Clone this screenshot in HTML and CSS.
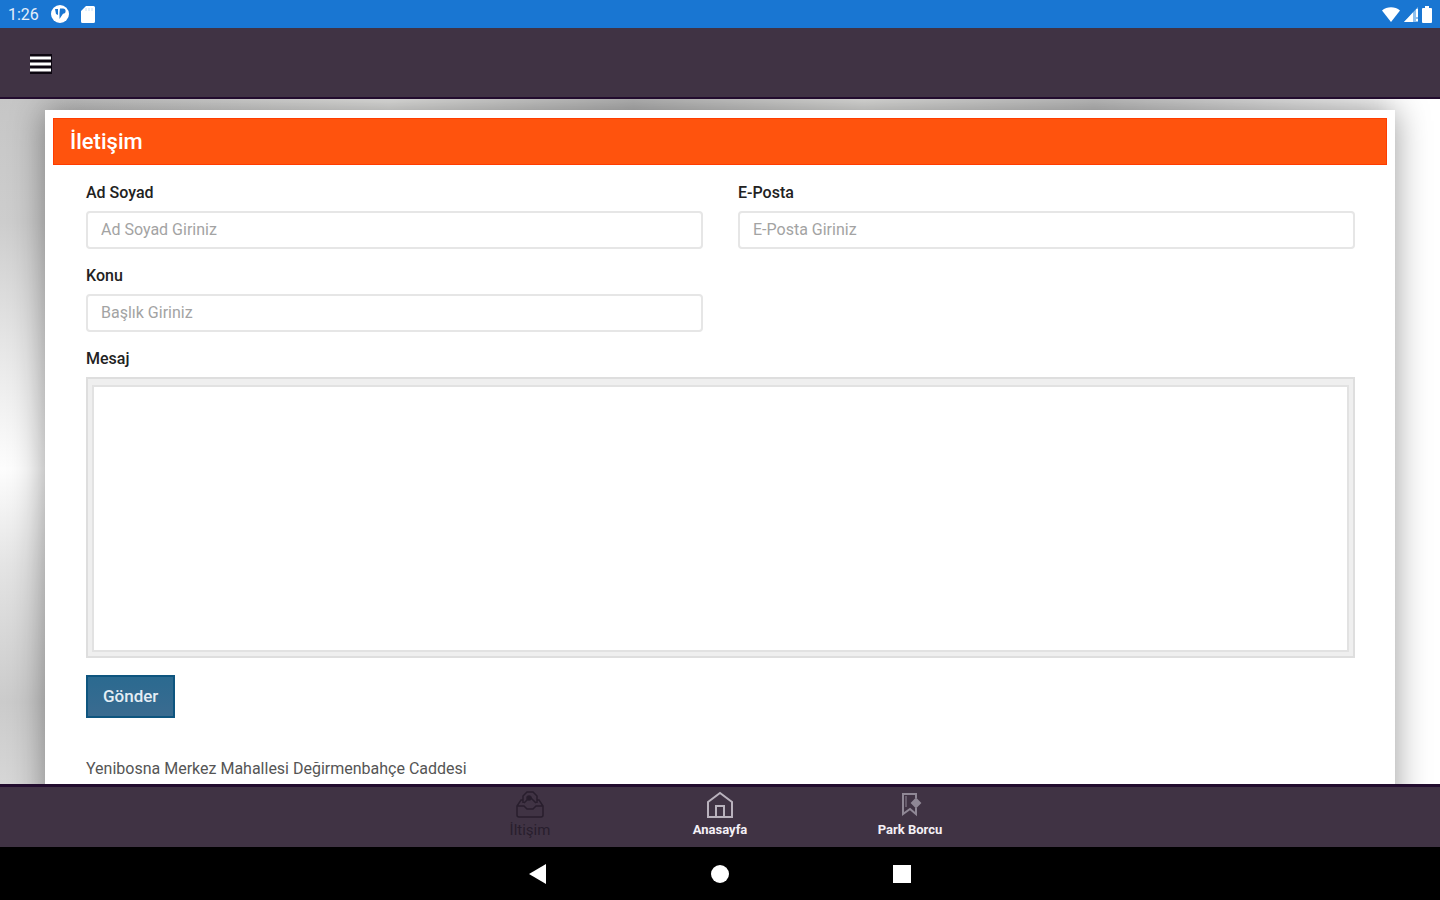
FILE: index.html
```html
<!DOCTYPE html>
<html lang="tr">
<head>
    <meta charset="UTF-8">
    <meta name="viewport" content="width=device-width, initial-scale=1.0">
    <title>İletişim</title>
    <link rel="stylesheet" href="styles.css">
</head>
<body>
    <div class="status-bar">
        <div class="status-left">
            <span class="time">1:26</span>
            <svg width="18" height="18" viewBox="0 0 18 18">
                <circle cx="9" cy="9" r="9" fill="#fff"/>
                <path d="M4 4h3v6L5 9zM9 3.500h3a2.600 2.600 0 0 1 0 5.200L8.500 14V8z" fill="#1976d2"/>
            </svg>
            <svg width="14" height="17" viewBox="0 0 14 17">
                <path d="M5 0h7.500A1.500 1.500 0 0 1 14 1.500v14a1.500 1.500 0 0 1-1.500 1.500h-11A1.500 1.500 0 0 1 0 15.500V5z" fill="#fff"/>
                <path d="M5 2v3M8 2v3M11 2v3" stroke="#c5def6"/>
            </svg>
        </div>
        <div class="status-right">
            <svg width="18" height="15" viewBox="0 0 18 15">
                <path d="M0 3.500C5-.8 13-.8 18 3.500L9 15z" fill="#fff"/>
            </svg>
            <svg width="14" height="15" viewBox="0 0 14 15">
                <path d="M14 0v15H0z" fill="#8fc0ee"/>
                <path d="M9 5.400V15H0z" fill="#fff"/>
                <path d="M13 2v8M13 12v2" stroke="#fff" stroke-width="2"/>
            </svg>
            <svg width="10" height="17" viewBox="0 0 10 17">
                <path d="M3 0h4v2h2a1 1 0 0 1 1 1v13a1 1 0 0 1-1 1H1a1 1 0 0 1-1-1V3a1 1 0 0 1 1-1h2z" fill="#fff"/>
            </svg>
        </div>
    </div>

    <header class="app-bar">
        <button class="menu-btn" aria-label="Menü">
            <svg width="24" height="22" viewBox="0 0 24 22">
                <path d="M1 1h22v20H1z" fill="#0c0610"/>
                <path d="M1 5h21M1 11h21M1 17h21" stroke="#fff" stroke-width="3"/>
            </svg>
        </button>
    </header>

    <main class="content">
        <section class="card">
            <h1>İletişim</h1>
            <form class="contact-form">
                <div class="form-grid">
                    <div class="form-group">
                        <label for="name">Ad Soyad</label>
                        <input type="text" id="name" placeholder="Ad Soyad Giriniz">
                    </div>
                    <div class="form-group">
                        <label for="email">E-Posta</label>
                        <input type="email" id="email" placeholder="E-Posta Giriniz">
                    </div>
                    <div class="form-group">
                        <label for="subject">Konu</label>
                        <input type="text" id="subject" placeholder="Başlık Giriniz">
                    </div>
                    <div class="form-group wide">
                        <label for="message">Mesaj</label>
                        <div class="editor">
                            <textarea id="message"></textarea>
                        </div>
                    </div>
                </div>
                <button type="button" class="send-btn">Gönder</button>
                <p class="address">Yenibosna Merkez Mahallesi Değirmenbahçe Caddesi</p>
            </form>
        </section>
    </main>

    <nav class="tab-bar">
        <a href="#" class="tab active">
            <svg width="28" height="28" viewBox="0 0 28 28" fill="none" stroke="currentColor" stroke-width="1.500">
                <path d="M7 9H5l-4 6v9a2 2 0 0 0 2 2h22a2 2 0 0 0 2-2v-9l-4-6h-2M1 15h7l3 3h6l3-3h7"/>
                <path d="M7 12V5l4-4h6l4 4v7M8 12l6-6 6 6"/>
                <circle cx="13" cy="7" r="2" fill="currentColor"/>
            </svg>
            <span>İltişim</span>
        </a>
        <a href="#" class="tab">
            <svg width="28" height="28" viewBox="0 0 28 28" fill="none" stroke="#b9b2bd" stroke-width="2">
                <path d="M2 11 14 2l12 9v15H2z"/>
                <path d="M10 26V15h8v11"/>
            </svg>
            <span>Anasayfa</span>
        </a>
        <a href="#" class="tab">
            <svg width="28" height="28" viewBox="0 0 28 28" fill="none" stroke="#8f8795" stroke-width="2">
                <path d="M20 7V3H7v20l7-5 6 5v-6"/>
                <path d="M10 5v11" stroke-width="1"/>
                <path d="m20 8 4 4-4 4-4-4z" fill="#8f8795"/>
            </svg>
            <span>Park Borcu</span>
        </a>
    </nav>

    <div class="system-bar">
        <button aria-label="Geri">
            <svg width="20" height="20" viewBox="0 0 20 20"><path d="M18 0v20L1 10z" fill="#fff"/></svg>
        </button>
        <button aria-label="Ana ekran">
            <svg width="20" height="20" viewBox="0 0 20 20"><circle cx="10" cy="10" r="9" fill="#fff"/></svg>
        </button>
        <button aria-label="Son uygulamalar">
            <svg width="20" height="20" viewBox="0 0 20 20"><path d="M1 1h18v18H1z" fill="#fff"/></svg>
        </button>
    </div>
</body>
</html>
```
FILE: styles.css
```css
* {
    margin: 0;
    padding: 0;
    box-sizing: border-box;
    font-family: Roboto, 'Liberation Sans', sans-serif;
}

body {
    display: flex;
    flex-direction: column;
    height: 100vh;
    overflow: hidden;
    background: #fff;
    color: #222;
    font-size: 16px;
}

svg {
    display: block;
}

button {
    border: none;
    background: none;
    cursor: pointer;
}

/* Android status bar */
.status-bar {
    display: flex;
    justify-content: space-between;
    align-items: center;
    flex: none;
    height: 28px;
    padding: 0 8px;
    background: #1976d2;
    color: #e3effb;
}

.status-left {
    display: flex;
    align-items: center;
    gap: 12px;
}

.status-right {
    display: flex;
    align-items: center;
    gap: 4px;
}

.time {
    font-size: 16px;
}

.app-bar {
    display: flex;
    align-items: center;
    flex: none;
    height: 71px;
    padding: 2px 29px 0;
    background: #403344;
    border-bottom: 2px solid #220c2e;
}

/* Page background */
.content {
    flex: 1;
    min-height: 0;
    overflow: hidden;
    padding: 11px 45px 0;
    background:
        linear-gradient(90deg, transparent 92%, #fff 97%),
        linear-gradient(90deg, transparent 4%, #e8e8e6 27%, #bbb 44%, #e4e4e2 60%, #c4c4c4 76%, #eee 92%),
        linear-gradient(180deg, #c6c6c6 0%, #cdcdcd 18%, #e6e6e6 36%, #fdfdfd 54%, #e4e4e4 68%, #cbcbcb 88%, #d6d6d6 100%);
}

.card {
    padding: 8px 8px 64px;
    background: #fff;
    box-shadow: 0 0 32px rgba(0, 0, 0, 0.4);
}

.card h1 {
    padding: 0 16px;
    background: #ff530d;
    border: 1px solid #ff3c00;
    color: #fff;
    font-size: 22px;
    font-weight: 500;
    line-height: 45px;
}

.contact-form {
    padding: 16px 32px 0 33px;
}

.form-grid {
    display: grid;
    grid-template-columns: 1fr 1fr;
    gap: 15px 35px;
}

.form-group label {
    display: block;
    margin-bottom: 6px;
    font-weight: 500;
    line-height: 24px;
}

.form-group input {
    display: block;
    width: 100%;
    height: 38px;
    padding: 0 13px 2px;
    border: 2px solid #e6e6e6;
    border-radius: 4px;
    background: #fff;
    font-size: 16px;
}

.form-group input::placeholder {
    color: #a3a3a3;
}

.wide {
    grid-column: 1 / -1;
}

.editor {
    height: 281px;
    padding: 6px 4px 4px;
    border: 2px solid #dedede;
    background: #efefef;
}

.editor textarea {
    display: block;
    width: 100%;
    height: 100%;
    border: 2px solid #e2e2e2;
    background: #fff;
    font-size: 16px;
    resize: none;
}

.send-btn {
    margin-top: 17px;
    padding: 0 15px;
    border: 2px solid #0e557f;
    background: linear-gradient(#2b6a90, #3a6b90);
    color: #e4eef5;
    font-size: 17px;
    font-weight: 500;
    line-height: 39px;
}

.address {
    margin-top: 39px;
    color: #555;
    line-height: 24px;
}

/* Bottom tabs */
.tab-bar {
    display: flex;
    justify-content: center;
    flex: none;
    height: 63px;
    background: #403344;
    border-top: 3px solid #220c2e;
}

.tab {
    display: flex;
    flex-direction: column;
    align-items: center;
    gap: 1px;
    width: 190px;
    padding-top: 4px;
    color: #f4f0f6;
    font-size: 13px;
    font-weight: 700;
    line-height: 20px;
    text-decoration: none;
}

.tab.active {
    color: #281e2d;
    font-size: 15px;
    font-weight: 400;
}

.system-bar {
    display: flex;
    justify-content: center;
    flex: none;
    height: 53px;
    background: #000;
}

.system-bar button {
    display: flex;
    justify-content: center;
    align-items: center;
    width: 182px;
}
```
